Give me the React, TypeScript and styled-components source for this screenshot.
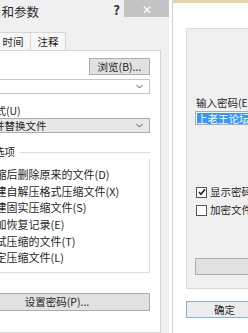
import React from 'react'
import styled, { createGlobalStyle } from 'styled-components'

const GlobalStyle = createGlobalStyle`
  html, body {
    margin: 0;
    padding: 0;
    overflow: hidden;
    background: #fff;
  }
  body {
    font-family: 'Noto Sans CJK SC', 'Noto Sans', sans-serif;
    color: #1f1f1f;
  }
  * { box-sizing: border-box; }
`

const Screen = styled.div`
  display: flex;
  width: 248px;
  height: 333px;
  overflow: hidden;
  font-size: 10.5px;
  line-height: 14px;
`

// left dialog, its left part lies off screen
const LeftDialog = styled.div`
  flex: 0 0 209px;
  margin-left: -40px;
  display: flex;
  flex-direction: column;
  background: #f0f0f0;
`

const TitleBar = styled.div`
  display: flex;
  align-items: flex-start;
  height: 32px;
`

const Title = styled.div`
  flex: 1;
  margin-left: -21px;
  padding-top: 5px;
  font-size: 12.5px;
  line-height: 14px;
  color: #2b2b2b;
  white-space: nowrap;
`

const Help = styled.div`
  margin: 3px 4px 0 0;
  font-size: 13px;
  font-weight: bold;
  line-height: 14px;
  color: #333;
`

const Close = styled.div`
  width: 45px;
  height: 17px;
  display: flex;
  align-items: center;
  justify-content: center;
  background: #c4c4c4;
  color: #fff;
  font-size: 12px;
`

const TabStrip = styled.div`
  display: flex;
  height: 18px;
  padding-left: 36px;
`

const Tab = styled.div`
  width: 36px;
  border: 1px solid #d6d6d6;
  border-bottom: none;
  margin-left: -1px;
  background: #f7f7f7;
  text-align: center;
  line-height: 17px;
`

const TabPanel = styled.div`
  flex: 1;
  display: flex;
  flex-direction: column;
  margin: 0 8px 0 4px;
  padding: 7px 10px 0 0;
  border: 1px solid #d6d6d6;
  border-left: none;
  background: #fff;
`

const Button = styled.div<{ $w?: number; $mt?: number; $h?: number }>`
  height: ${p => p.$h ?? 17}px;
  ${p => p.$w ? `width: ${p.$w}px; align-self: flex-end;` : ''}
  margin-top: ${p => p.$mt ?? 0}px;
  border: 1px solid #adadad;
  background: #e1e1e1;
  display: flex;
  align-items: center;
  justify-content: center;
  white-space: nowrap;
`

const Combo = styled.div<{ $gray?: boolean; $mt?: number }>`
  height: 15px;
  margin-top: ${p => p.$mt ?? 0}px;
  display: flex;
  align-items: center;
  padding: 0 6px 0 8px;
  border: 1px solid ${p => p.$gray ? '#acacac' : '#c6c6c6'};
  background: ${p => p.$gray ? '#e8e8e8' : '#fff'};
  white-space: nowrap;
`

const ComboText = styled.span`
  flex: 1;
  overflow: hidden;
`

const FieldLabel = styled.div<{ $mt?: number }>`
  margin-top: ${p => p.$mt ?? 0}px;
  white-space: nowrap;
`

const GroupHead = styled.div`
  display: flex;
  align-items: center;
  gap: 5px;
  margin-top: 12px;
  padding-left: 9px;
  white-space: nowrap;
  &::after {
    content: '';
    flex: 1;
    border-top: 1px solid #dcdcdc;
  }
`

const GroupBody = styled.div`
  display: flex;
  flex-direction: column;
  padding: 7px 0 6px 5px;
  border: 1px solid #dcdcdc;
  border-top: none;
  font-size: 11px;
`

const Option = styled.div`
  display: flex;
  align-items: center;
  gap: 3.5px;
  height: 16.6px;
  white-space: nowrap;
`

const Box = styled.div`
  flex: none;
  width: 11px;
  height: 11px;
  border: 1px solid #555;
  background: #fff;
  display: flex;
  align-items: center;
  justify-content: center;
`

// right dialog
const RightDialog = styled.div`
  flex: 1;
  margin-left: 3px;
  display: flex;
  flex-direction: column;
  border-left: 1px solid #d2d2d2;
  background: #fff;
`

const TopStrip = styled.div`
  height: 3px;
  background: #e4d3a6;
`

const Panel = styled.div`
  margin: 25px 0 0 13px;
  height: 261px;
  display: flex;
  flex-direction: column;
  padding: 67px 0 0 9px;
  border: 1px solid #dadada;
  border-right: none;
  background: #f0f0f0;
  white-space: nowrap;
`

const Input = styled.div`
  height: 14px;
  margin: 1px 0 0 -1px;
  padding-left: 1px;
  border: 1px solid #abadb3;
  border-right: none;
  background: #fff;
  display: flex;
  align-items: center;
`

const Selected = styled.span`
  background: #3399ff;
  color: #fff;
  line-height: 11px;
`

const CheckRow = styled.div<{ $mt: number }>`
  display: flex;
  align-items: center;
  gap: 3px;
  margin-top: ${p => p.$mt}px;
`

const PanelButton = styled(Button)`
  margin-left: -1px;
  border-right: none;
`

const OkButton = styled.div`
  width: 77px;
  height: 17px;
  margin: 12px 0 0 13px;
  border: 1px solid #7eb4ea;
  background: #ececec;
  display: flex;
  align-items: center;
  justify-content: center;
`

const CheckMark = () => (
  <svg width='8' height='8' viewBox='0 0 8 8'>
    <path d='M1 4 L3 6.2 L7 1.2' fill='none' stroke='#222' strokeWidth='1.6' />
  </svg>
)

const Arrow = () => (
  <svg width='7' height='5' viewBox='0 0 7 5'>
    <path d='M0.5 1 L3.5 4 L6.5 1' fill='none' stroke='#555' strokeWidth='1' />
  </svg>
)

const options = [
  '压缩后删除原来的文件(D)',
  '创建自解压格式压缩文件(X)',
  '创建固实压缩文件(S)',
  '添加恢复记录(E)',
  '测试压缩的文件(T)',
  '锁定压缩文件(L)'
]

export default function App () {
  return (
    <Screen>
      <GlobalStyle />
      <LeftDialog>
        <TitleBar>
          <Title>压缩文件名和参数</Title>
          <Help>?</Help>
          <Close>✕</Close>
        </TitleBar>
        <TabStrip>
          <Tab>时间</Tab>
          <Tab>注释</Tab>
        </TabStrip>
        <TabPanel>
          <Button $w={61}>浏览(B)...</Button>
          <Combo $mt={4}>
            <ComboText />
            <Arrow />
          </Combo>
          <FieldLabel $mt={10}>更新方式(U)</FieldLabel>
          <Combo $gray>
            <ComboText>添加并替换文件</ComboText>
            <Arrow />
          </Combo>
          <GroupHead>压缩选项</GroupHead>
          <GroupBody>
            {options.map(o => (
              <Option key={o}>
                <Box />
                {o}
              </Option>
            ))}
          </GroupBody>
          <Button $mt={20} $h={18}>设置密码(P)...</Button>
        </TabPanel>
      </LeftDialog>
      <RightDialog>
        <TopStrip />
        <Panel>
          <FieldLabel>输入密码(E)</FieldLabel>
          <Input>
            <Selected>上老王论坛</Selected>
          </Input>
          <CheckRow $mt={60}>
            <Box><CheckMark /></Box>
            显示密码
          </CheckRow>
          <CheckRow $mt={4}>
            <Box />
            加密文件
          </CheckRow>
          <PanelButton $mt={41} />
        </Panel>
        <OkButton>确定</OkButton>
      </RightDialog>
    </Screen>
  )
}
